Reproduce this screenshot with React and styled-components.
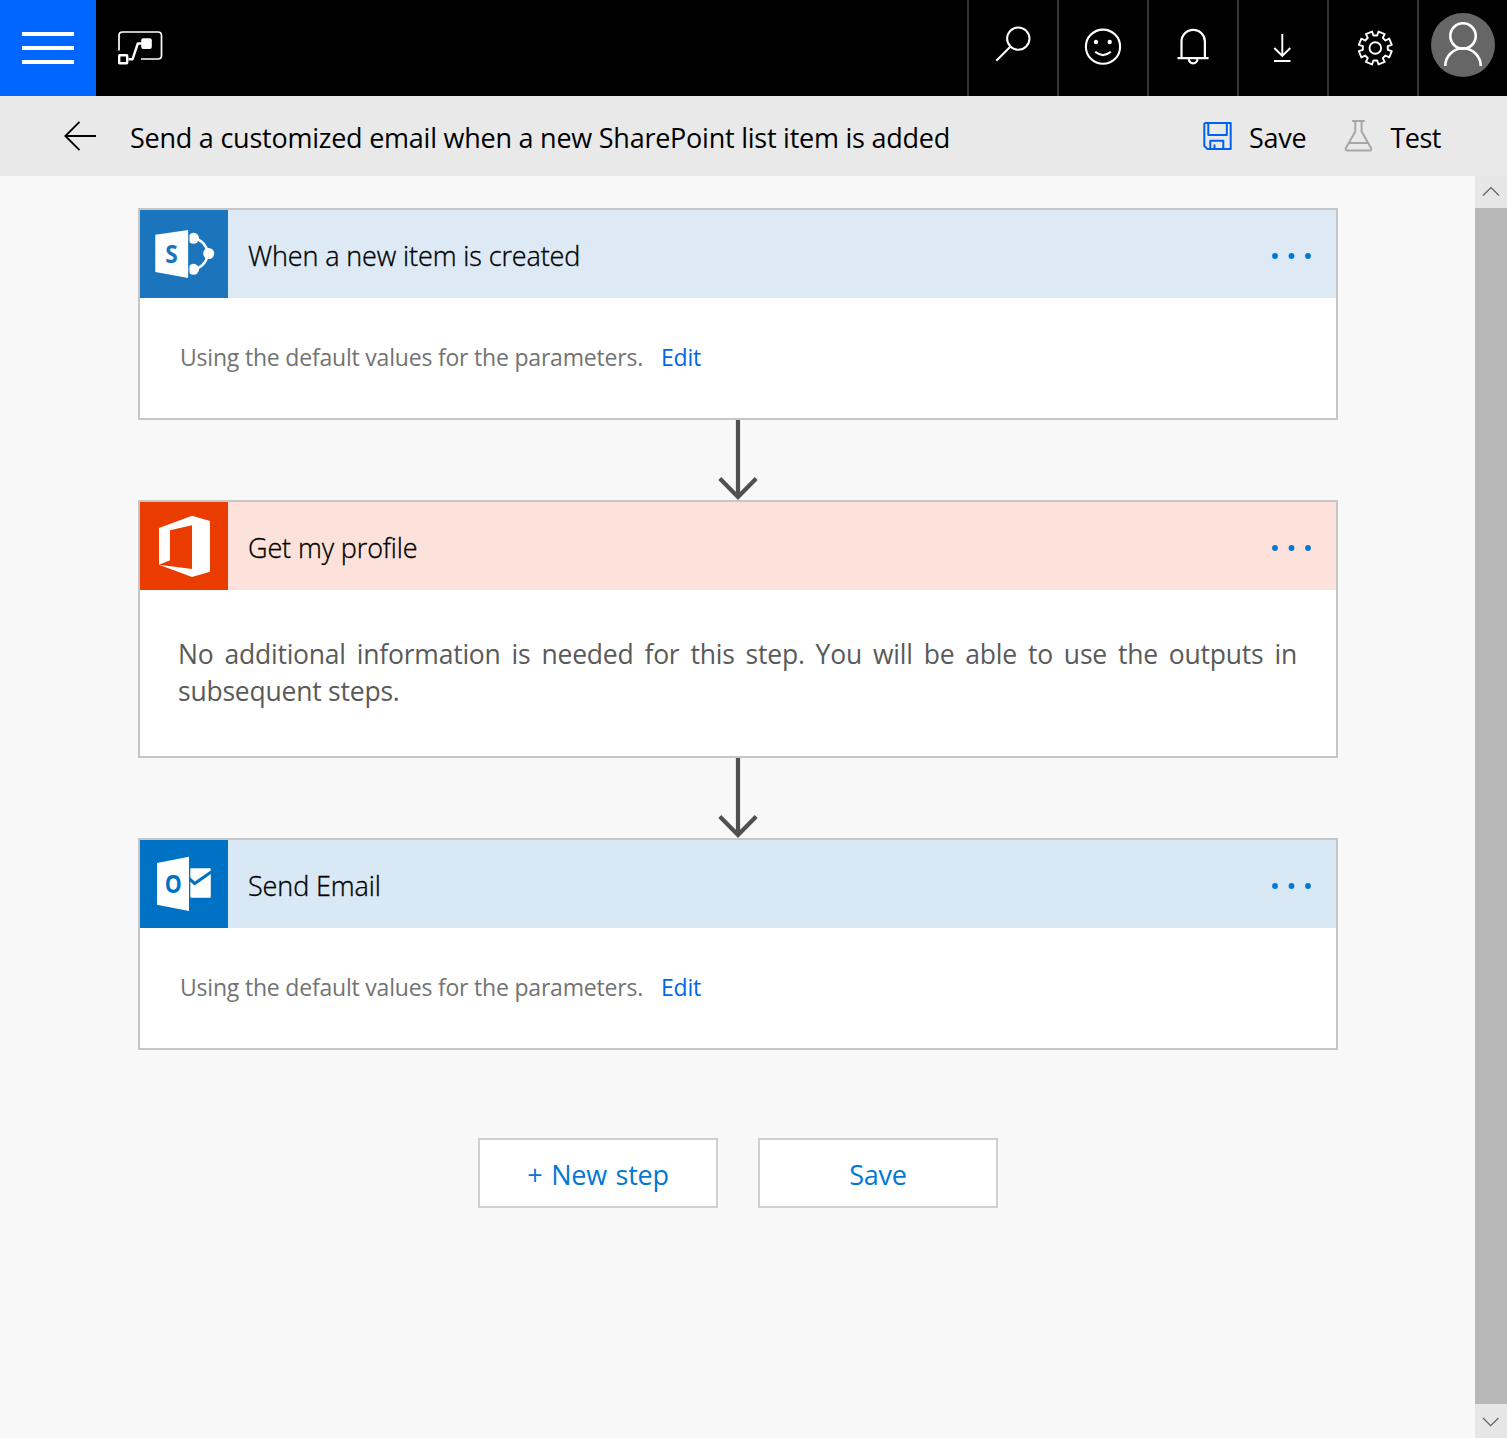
import React from 'react';
import styled, { createGlobalStyle } from 'styled-components';

const GlobalStyle = createGlobalStyle`
  * { box-sizing: border-box; }
  html, body { margin: 0; padding: 0; background: #f8f8f8; overflow: hidden; }
  body { font-family: 'Open Sans', 'Noto Sans', sans-serif; color: #000; }
  svg { display: block; flex: none; }
  button { font: inherit; color: inherit; border: 0; background: none; padding: 0; margin: 0; }
`;

const Page = styled.div`
  display: flex;
  flex-direction: column;
  width: 100%;
  height: 100vh;
`;

const TopBar = styled.header`
  display: flex;
  flex: none;
  height: 96px;
  background: #000;
`;

const MenuButton = styled.button`
  display: flex;
  flex-direction: column;
  align-items: center;
  justify-content: center;
  gap: 10px;
  width: 96px;
  background: #0066ff;
`;

const MenuLine = styled.span`
  width: 52px;
  height: 4px;
  background: #fff;
`;

const Brand = styled.div`
  flex: 1;
  padding: 28px 0 0 20px;
`;

const TopCell = styled.button`
  display: flex;
  align-items: center;
  justify-content: center;
  width: 90px;
  border-left: 2px solid #333;
  padding-bottom: ${(p) => p.$lift || 0}px;
`;

const CommandBar = styled.div`
  display: flex;
  flex: none;
  align-items: center;
  height: 80px;
  padding: 0 66px 0 64px;
  background: #e9e9e9;
`;

const Label = styled.span`
  font-size: 27px;
  line-height: 36px;
  padding-top: 4px;
  white-space: nowrap;
  letter-spacing: ${(p) => p.$track || 0}px;
  word-spacing: ${(p) => p.$words || 0}px;
`;

const FlowTitle = styled(Label)`
  flex: 1;
  margin-left: 34px;
`;

const Command = styled.button`
  display: flex;
  align-items: center;
  gap: ${(p) => p.$gap}px;
  margin-left: ${(p) => p.$before || 0}px;
`;

const Body = styled.div`
  display: flex;
  flex: 1;
  min-height: 0;
`;

const Canvas = styled.main`
  flex: 1;
  padding: 32px 0 0 138px;
`;

const Steps = styled.div`
  display: flex;
  flex-direction: column;
  align-items: center;
  width: 1200px;
`;

const Card = styled.section`
  width: 100%;
  border: 2px solid #c6c6c6;
  background: #fff;
`;

const CardHeader = styled.div`
  display: flex;
  align-items: center;
  height: 88px;
  padding-right: 20px;
  background: ${(p) => p.$tint};
`;

const CardTitle = styled(Label)`
  flex: 1;
  margin-left: 20px;
  font-weight: 300;
  -webkit-text-stroke: 0.35px #000;
`;

const CardBody = styled.div`
  display: flex;
  align-items: center;
  height: 120px;
  padding: 0 0 2px 40px;
  font-size: 23px;
  line-height: 32px;
  color: #737373;
  white-space: nowrap;
`;

const Hint = styled.span`
  width: 481px;
  letter-spacing: -0.2px;
`;

const EditLink = styled.a`
  color: #0066e8;
  letter-spacing: -0.2px;
`;

const Note = styled.p`
  height: 166px;
  margin: 0;
  padding: 46px 39px 0 38px;
  font-size: 26.5px;
  line-height: 37px;
  letter-spacing: -0.22px;
  text-align: justify;
  color: #5a5a5a;
`;

const Actions = styled.div`
  display: flex;
  gap: 40px;
  margin-top: 88px;
`;

const ActionButton = styled.button`
  display: flex;
  align-items: center;
  justify-content: center;
  width: 240px;
  height: 70px;
  border: 2px solid #d0d0d0;
  background: #fff;
  color: #0078d7;
`;

const ScrollTrack = styled.div`
  display: flex;
  flex-direction: column;
  width: 32px;
  background: #e6e6e6;
`;

const ScrollThumb = styled.div`
  flex: 1;
  background: #b8b8b8;
`;

const line = (width) => ({ fill: 'none', stroke: '#fff', strokeWidth: width });

const FlowLogo = () => (
  <svg width="50" height="40" viewBox="0 0 50 40">
    <path d="M3 22.5V7.5Q3 4 6.500 4H42Q45.500 4 45.500 7.500V27.500Q45.500 31 42 31H25" {...line(1.7)} />
    <rect x="3.200" y="27.200" width="8" height="8" rx="0.500" {...line(2.400)} />
    <path d="M12.500 31.300H16.500L21.800 15.500H26" strokeLinejoin="round" {...line(2.400)} />
    <rect x="25.200" y="10.200" width="10.600" height="10.800" rx="2" fill="#fff" />
  </svg>
);

const SearchIcon = () => (
  <svg width="48" height="48" viewBox="0 0 48 48">
    <circle cx="29.300" cy="14.600" r="11.200" {...line(2)} />
    <path d="M21.500 22.500L7.300 36.700" {...line(2)} />
  </svg>
);

const SmileIcon = () => (
  <svg width="48" height="48" viewBox="0 0 48 48">
    <circle cx="24" cy="22.700" r="17.100" {...line(2.100)} />
    <circle cx="17" cy="18" r="2.200" fill="#fff" />
    <circle cx="30.700" cy="18" r="2.200" fill="#fff" />
    <path d="M16.200 27.800Q24 34.300 31.800 27.800" {...line(2.100)} />
  </svg>
);

const BellIcon = () => (
  <svg width="48" height="48" viewBox="0 0 48 48">
    <path d="M12.500 34V17.500A11.700 11.700 0 0 1 35.900 17.500V34M8.500 34.200H39.600M19.700 34.500A4.400 4.900 0 0 0 28.500 34.500" {...line(2.200)} />
  </svg>
);

const DownloadIcon = () => (
  <svg width="48" height="48" viewBox="0 0 48 48">
    <path d="M23.300 10V32M15.300 24L23.300 32L31.300 24M15 37H31.500" {...line(1.900)} />
  </svg>
);

const gearPath = (() => {
  const at = (radius, deg) => {
    const a = (deg * Math.PI) / 180;
    return `${(26.3 + radius * Math.sin(a)).toFixed(2)} ${(24 - radius * Math.cos(a)).toFixed(2)}`;
  };
  const points = [];
  for (let k = 0; k < 8; k += 1) {
    const mid = 22.5 + 45 * k;
    points.push(at(12.6, mid - 14), at(16.8, mid - 11.5), at(16.8, mid + 11.5), at(12.6, mid + 14));
  }
  return `M${points.join('L')}Z`;
})();

const GearIcon = () => (
  <svg width="48" height="48" viewBox="0 0 48 48">
    <path d={gearPath} strokeLinejoin="round" {...line(1.900)} />
    <circle cx="26.300" cy="24" r="5.800" {...line(1.900)} />
  </svg>
);

const Avatar = () => (
  <svg width="64" height="64" viewBox="0 0 64 64">
    <circle cx="32" cy="32" r="32" fill="#666" />
    <circle cx="32" cy="23" r="12.700" {...line(2.600)} />
    <path d="M14.300 53A17.700 17.700 0 0 1 49.700 53" {...line(2.600)} />
  </svg>
);

const BackIcon = () => (
  <svg width="32" height="32" viewBox="0 0 32 32">
    <path d="M32 16H1.500M15.500 1.800L1.300 16L15.500 30.200" fill="none" stroke="#000" strokeWidth="1.900" />
  </svg>
);

const SaveIcon = () => (
  <svg width="30" height="32" viewBox="0 0 30 32">
    <path
      d="M2.500 3H28.700V29H5.500L2.300 26V3M6.300 3V15H24.800V3M8.300 29V20.700H21.300V29M12.500 24.500V29"
      fill="none"
      stroke="#0062ee"
      strokeWidth="2"
      strokeLinejoin="round"
    />
  </svg>
);

const FlaskIcon = () => (
  <svg width="30" height="34" viewBox="0 0 30 34">
    <path
      d="M8 2H20.800M11.300 2V12.500L1.900 29Q1 31.500 3.200 31.500H25.800Q28 31.500 27 29L17.600 12.500V2M5.500 24H23.500"
      fill="none"
      stroke="#a6a6a6"
      strokeWidth="2"
      strokeLinejoin="round"
    />
  </svg>
);

const SharePointIcon = () => (
  <svg width="88" height="88" viewBox="0 0 88 88">
    <rect width="88" height="88" fill="#1b75bc" />
    <path d="M53.700 28.300Q65 30 68.300 43.700Q65 57.500 53.700 59.300" {...line(2.500)} />
    <circle cx="53.500" cy="28.300" r="5.500" fill="#fff" />
    <circle cx="68.700" cy="43.500" r="5.500" fill="#fff" />
    <circle cx="53.500" cy="59.300" r="5.500" fill="#fff" />
    <path d="M15.300 24.700L48.400 19.900V67.900L15.300 62Z" fill="#fff" />
    <path d="M48.900 20V68" stroke="#1b75bc" strokeWidth="1.200" />
    <text x="25.300" y="53" fontSize="25.500" fontWeight="700" fill="#1b75bc" textLength="12.500" lengthAdjust="spacingAndGlyphs">S</text>
  </svg>
);

const OfficeIcon = () => (
  <svg width="88" height="88" viewBox="0 0 88 88">
    <rect width="88" height="88" fill="#eb3c00" />
    <path d="M19 26L52 13.700L70 19V69.700L52 75L19 62.700L52 67V23.300L30 28.300V58.300L19 62.700Z" fill="#fff" />
  </svg>
);

const OutlookIcon = () => (
  <svg width="88" height="88" viewBox="0 0 88 88">
    <rect width="88" height="88" fill="#0072c6" />
    <rect x="50.300" y="28.300" width="20.500" height="29.500" rx="1" fill="#fff" />
    <path d="M49 38.500L54.700 43.500L71.500 31.800" fill="none" stroke="#0072c6" strokeWidth="3" />
    <path d="M17 23L49 16.700V71L17 64.700Z" fill="#fff" />
    <text x="24.700" y="53" fontSize="25" fontWeight="700" fill="#0072c6" textLength="17" lengthAdjust="spacingAndGlyphs">O</text>
  </svg>
);

const MoreIcon = () => (
  <svg width="48" height="12" viewBox="0 0 48 12">
    {[7, 23.5, 40].map((x) => (
      <circle key={x} cx={x} cy="8" r="2.900" fill="#0078d7" />
    ))}
  </svg>
);

const Connector = () => (
  <svg width="40" height="80" viewBox="0 0 40 80">
    <path d="M20 0V77M1.800 58.500L20 77L38.200 58.500" fill="none" stroke="#505050" strokeWidth="4.200" />
  </svg>
);

const Chevron = ({ height, d }) => (
  <svg width="32" height={height} viewBox={`0 0 32 ${height}`}>
    <path d={d} fill="none" stroke="#606060" strokeWidth="1.200" />
  </svg>
);

const DefaultValues = () => (
  <CardBody>
    <Hint>Using the default values for the parameters.</Hint>
    <EditLink>Edit</EditLink>
  </CardBody>
);

const Step = ({ icon, title, tint, children }) => (
  <Card>
    <CardHeader $tint={tint}>
      {icon}
      <CardTitle $track={-0.12}>{title}</CardTitle>
      <MoreIcon />
    </CardHeader>
    {children}
  </Card>
);

export default function App() {
  return (
    <Page>
      <GlobalStyle />
      <TopBar>
        <MenuButton aria-label="Menu">
          <MenuLine />
          <MenuLine />
          <MenuLine />
        </MenuButton>
        <Brand><FlowLogo /></Brand>
        <TopCell><SearchIcon /></TopCell>
        <TopCell><SmileIcon /></TopCell>
        <TopCell><BellIcon /></TopCell>
        <TopCell><DownloadIcon /></TopCell>
        <TopCell><GearIcon /></TopCell>
        <TopCell $lift={6}><Avatar /></TopCell>
      </TopBar>
      <CommandBar>
        <BackIcon />
        <FlowTitle $track={-0.24}>Send a customized email when a new SharePoint list item is added</FlowTitle>
        <Command $gap={17}>
          <SaveIcon />
          <Label $track={-0.25}>Save</Label>
        </Command>
        <Command $gap={16} $before={38}>
          <FlaskIcon />
          <Label $track={-0.5}>Test</Label>
        </Command>
      </CommandBar>
      <Body>
        <Canvas>
          <Steps>
            <Step icon={<SharePointIcon />} title="When a new item is created" tint="#dde9f5">
              <DefaultValues />
            </Step>
            <Connector />
            <Step icon={<OfficeIcon />} title="Get my profile" tint="#fce2da">
              <Note>
                No additional information is needed for this step. You will be able to use the outputs in
                subsequent steps.
              </Note>
            </Step>
            <Connector />
            <Step icon={<OutlookIcon />} title="Send Email" tint="#d9e8f5">
              <DefaultValues />
            </Step>
            <Actions>
              <ActionButton><Label $track={-0.25} $words={2}>+ New step</Label></ActionButton>
              <ActionButton><Label $track={-0.25}>Save</Label></ActionButton>
            </Actions>
          </Steps>
        </Canvas>
        <ScrollTrack>
          <Chevron height={32} d="M8 19.500L16 11.500L24 19.500" />
          <ScrollThumb />
          <Chevron height={34} d="M8 14L15.700 21.700L23.500 14" />
        </ScrollTrack>
      </Body>
    </Page>
  );
}
